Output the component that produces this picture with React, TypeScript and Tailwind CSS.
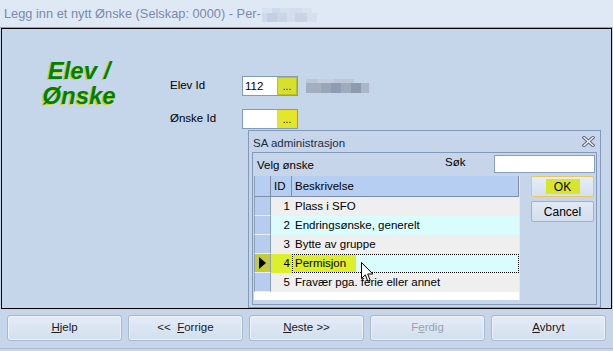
import React from "react";

function Btn({ children, disabled }: { children: React.ReactNode; disabled?: boolean }) {
  return (
    <div
      className={
        "flex-1 h-[26px] flex items-center justify-center rounded-[3px] border border-[#a7b9d2] bg-gradient-to-b from-[#e4ecf7] to-[#d3dfef] shadow-[inset_0_0_0_1px_#eef3fa] text-[11.5px] " +
        (disabled ? "text-[#9aa2ad]" : "text-[#1a1a1a]")
      }
    >
      {children}
    </div>
  );
}

function YellowDots({ bright }: { bright?: boolean }) {
  return (
    <div
      className={
        "w-[20px] h-full flex items-end justify-center pb-[2px] text-[10px] leading-none text-black " +
        (bright ? "bg-[#e3e62c] border border-[#f2dc1e]" : "bg-[#d7e12d] border border-[#b9c224]")
      }
    >
      ...
    </div>
  );
}

const rows = [
  { id: 1, d: "Plass i SFO" },
  { id: 2, d: "Endringsønske, generelt" },
  { id: 3, d: "Bytte av gruppe" },
  { id: 4, d: "Permisjon" },
  { id: 5, d: "Fravær pga. ferie eller annet" },
];

export default function App() {
  return (
    <div className="relative w-[613px] h-[351px] overflow-hidden bg-[#c6d5ea] font-['Liberation_Sans',Arial,sans-serif] flex flex-col">
      {/* title bar */}
      <div className="h-[28px] shrink-0 bg-[#dfe9f5] border-b border-[#8ca5c6] flex items-center pl-[4px] pt-[1px]">
        <span className="text-[12.8px] text-[#7b8aab] leading-none whitespace-nowrap">
          Legg inn et nytt Ønske (Selskap: 0000) - Per-
        </span>
        <div className="flex flex-col ml-[1px] mt-[1px]">
          <div className="flex h-[5px]">
            <div className="w-[10px] bg-[#d9e2f0]" />
            <div className="w-[8px] bg-[#cdd8ea]" />
            <div className="w-[10px] bg-[#d6dfee]" />
            <div className="w-[12px] bg-[#d2dcec]" />
            <div className="w-[10px] bg-[#d8e1ef]" />
          </div>
          <div className="flex h-[9px]">
            <div className="w-[5px] bg-[#cfd9ea]" />
            <div className="w-[10px] bg-[#c3cfe4]" />
            <div className="w-[10px] bg-[#cad5e8]" />
            <div className="w-[8px] bg-[#d3ddec]" />
            <div className="w-[12px] bg-[#c8d3e6]" />
            <div className="w-[10px] bg-[#d6dfee]" />
          </div>
        </div>
      </div>

      {/* main panel */}
      <div className="h-[281px] shrink-0 ml-px mr-[1px] border border-black bg-[#c5d5ea] flex">
        <div className="w-[152px] ml-px pt-[29px] text-center text-[24px] leading-[25px] font-bold italic text-[#008000] [text-shadow:-1px_1px_0_#d6d21a]">
          <div>Elev /</div>
          <div>Ønske</div>
        </div>
        <div className="ml-[15px] pt-[47px] flex flex-col gap-[13px] text-[11.5px] text-black">
          <div className="flex items-center h-[20px]">
            <span className="w-[72px]">Elev Id</span>
            <div className="w-[56px] h-[20px] bg-white border border-[#7f9db9] flex items-stretch">
              <span className="flex-1 pl-[2px] leading-[18px] text-[11.5px]">112</span>
              <YellowDots />
            </div>
            <div className="ml-[8px] flex flex-col">
              <div className="flex h-[4px]">
                <div className="w-[12px] bg-[#bcc6d6]" />
                <div className="w-[16px] bg-[#c5cedc]" />
                <div className="w-[20px] bg-[#bcc6d6]" />
              </div>
              <div className="flex h-[10px]">
                <div className="w-[15px] bg-[#a3aec0]" />
                <div className="w-[10px] bg-[#9ba6b8]" />
                <div className="w-[10px] bg-[#8f9bb0]" />
                <div className="w-[10px] bg-[#a0abbe]" />
                <div className="w-[10px] bg-[#8e9aae]" />
                <div className="w-[8px] bg-[#aab5c6]" />
              </div>
            </div>
          </div>
          <div className="flex items-center h-[20px]">
            <span className="w-[72px]">Ønske Id</span>
            <div className="w-[56px] h-[20px] bg-white border border-[#7f9db9] flex items-stretch">
              <span className="flex-1" />
              <YellowDots bright />
            </div>
          </div>
        </div>
      </div>

      {/* footer */}
      <div className="flex-1 flex flex-col">
        <div className="flex gap-[6px] px-[7px] pt-[6px] pb-[7px] border-b border-[#a9bad2]">
          <Btn>
            <span><u>H</u>jelp</span>
          </Btn>
          <Btn>
            <span>&lt;&lt;&nbsp; <u>F</u>orrige</span>
          </Btn>
          <Btn>
            <span><u>N</u>este &gt;&gt;</span>
          </Btn>
          <Btn disabled>
            <span>F<u>e</u>rdig</span>
          </Btn>
          <Btn>
            <span><u>A</u>vbryt</span>
          </Btn>
        </div>
      </div>

      {/* popup window */}
      <div className="absolute left-[248px] top-[130px] w-[353px] h-[178px] border border-[#8299b9] bg-[#c6d5ea] flex flex-col text-[11.5px] text-black">
        <div className="h-[21px] shrink-0 flex items-center pl-[4px] pr-[5px] pt-[4px]">
          <span className="text-[#1d2b45]">SA administrasjon</span>
          <svg className="ml-auto -mt-[4px]" width="13" height="11" viewBox="0 0 13 11">
            <path d="M2 1.5 L11 9.5 M11 1.5 L2 9.5" stroke="#5d6b82" strokeWidth="3.4" strokeLinecap="square" />
            <path d="M2 1.5 L11 9.5 M11 1.5 L2 9.5" stroke="#f4f7fb" strokeWidth="1.3" strokeLinecap="square" />
          </svg>
        </div>
        <div className="flex-1 mx-[3px] mb-[2px] border border-[#8299b9] flex flex-col">
          <div className="h-[23px] shrink-0 flex pl-[4px]">
            <span className="w-[188px] pt-[6px] leading-[13px]">Velg ønske</span>
            <span className="w-[49px] pt-[3px] leading-[13px]">Søk</span>
            <div className="mt-[2px] w-[101px] h-[18px] bg-white border border-[#8a9fbd]" />
          </div>
          <div className="flex pl-[1px]">
            {/* grid */}
            <div className="w-[266px] h-[124px] bg-white border-r border-[#e4eaf2] flex flex-col">
              <div className="flex h-[21px] bg-[#b6cef2]">
                <div className="w-[17px] border-r border-b border-[#7e8ea8] border-l border-l-[#8d9ebb]" />
                <div className="w-[21px] border-r border-b border-[#7e8ea8] pl-[3px] leading-[20px]">ID</div>
                <div className="flex-1 border-r border-b border-[#7e8ea8] pl-[3px] leading-[20px]">Beskrivelse</div>
              </div>
              {rows.map((r) => {
                const even = r.id % 2 === 0;
                const sel = r.id === 4;
                return (
                  <div key={r.id} className={"flex h-[19px] " + (even ? "bg-[#dbfcfd]" : "bg-[#efefef]")}>
                    <div
                      className={
                        "w-[17px] flex items-center justify-center border-r border-r-[#8d9ebb] border-l border-l-[#8d9ebb] border-b border-b-[#e8eef7] " +
                        (sel ? "bg-[#c3cb3a]" : "bg-[#b6cdf0]")
                      }
                    >
                      {sel && (
                        <svg width="7" height="12" viewBox="0 0 7 12">
                          <path d="M0 0 L7 6 L0 12 Z" fill="#000" />
                        </svg>
                      )}
                    </div>
                    <div className={"w-[21px] text-right pr-[2px] leading-[19px] " + (sel ? "bg-[#dcee2c]" : "")}>{r.id}</div>
                    {sel ? (
                      <div className="flex-1 border border-dotted border-black flex">
                        <span className="w-[63px] bg-[#dcee2c] pl-[2px] leading-[17px]">{r.d}</span>
                      </div>
                    ) : (
                      <div className="flex-1 pl-[3px] leading-[19px] whitespace-nowrap">{r.d}</div>
                    )}
                  </div>
                );
              })}
            </div>
            {/* buttons */}
            <div className="ml-[11px] flex flex-col gap-[4px]">
              <div className="w-[63px] h-[21px] rounded-[2px] border border-[#eac75e] bg-gradient-to-b from-[#e6edf6] to-[#d5e0ee] flex items-center justify-center">
                <span className="w-[34px] h-[15px] bg-[#d9e52b] flex items-center justify-center text-[12px]">OK</span>
              </div>
              <div className="w-[63px] h-[21px] rounded-[2px] border border-[#9fb1ca] bg-gradient-to-b from-[#e2e9f4] to-[#d3dfee] flex items-center justify-center text-[12px]">
                Cancel
              </div>
            </div>
          </div>
        </div>
      </div>

      {/* mouse cursor */}
      <svg className="absolute left-[361px] top-[262px]" width="13" height="21" viewBox="0 0 13 21">
        <path
          d="M0.5 0.5 L0.5 16.5 L4.3 12.8 L6.8 19.2 L9.2 18.2 L6.7 12 L11.8 12 Z"
          fill="#ffffff"
          stroke="#000000"
          strokeWidth="1"
          strokeLinejoin="miter"
        />
      </svg>
    </div>
  );
}
